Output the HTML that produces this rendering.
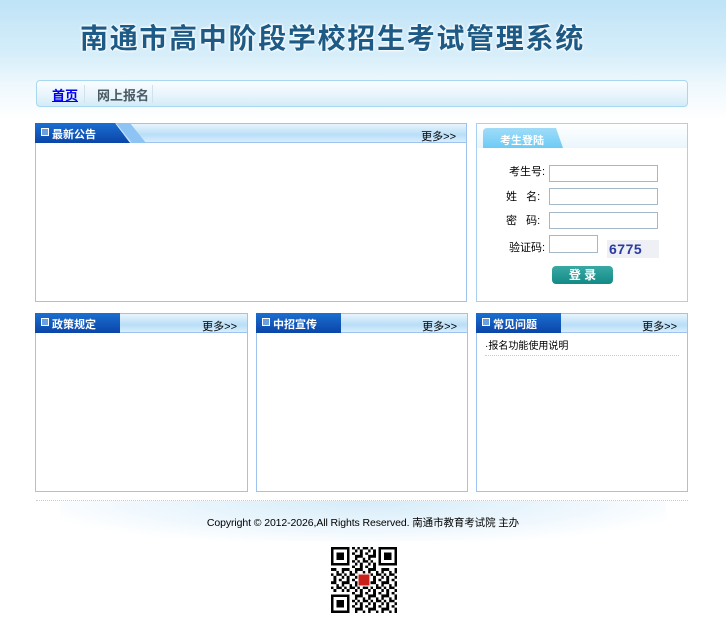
<!DOCTYPE html>
<html><head><meta charset="utf-8"><style>
*{margin:0;padding:0;box-sizing:border-box}
body{width:726px;height:629px;overflow:hidden;background:#fff;font-family:"Liberation Sans","Noto Sans CJK SC",sans-serif;font-size:12px;color:#000;position:relative}
.hdr{position:absolute;left:0;top:0;width:726px;height:120px;background:linear-gradient(180deg,#bfe3f7 0%,#d6eefa 45%,#eef8fd 70%,#fff 100%)}
.title{position:absolute;left:80px;top:17px;font-size:28px;font-weight:bold;color:#1d5a85;letter-spacing:1.7px;text-shadow:0 0 3px #fff,0 0 3px #fff,0 0 2px #fff}
.nav{position:absolute;left:36px;top:80px;width:652px;height:27px;border:1px solid #a8d8f0;border-radius:4px;background:linear-gradient(180deg,#fafdff,#e6f4fc 60%,#d3ebf8)}
.nav a{position:absolute;top:4px;font-size:13px;font-weight:bold}
.box{position:absolute;border:1px solid #9ec3ef;background:#fff}
.bar{height:19px;background:linear-gradient(180deg,#e8f4fd,#b9def7 60%,#d8eefc);border-bottom:1px solid #9ec3ef;position:relative}
.tab{position:absolute;left:-1px;top:-1px;height:20px;background:linear-gradient(180deg,#1a6fd0,#0b45a8);color:#fff;font-weight:bold;font-size:11px;padding:3px 0 0 17px}
.tab:before{content:"";position:absolute;left:6px;top:5px;width:6px;height:6px;border:1px solid #fff;background:#6aa0e0}
.more{position:absolute;right:10px;top:4px;font-size:11px}
.qr{position:absolute;left:331px;top:547px}
</style></head><body>
<div class="hdr"></div>
<div class="title">南通市高中阶段学校招生考试管理系统</div>
<div class="nav">
<a style="left:15px;color:#0000ee;text-decoration:underline">首页</a>
<span style="position:absolute;left:47px;top:4px;width:1px;height:18px;background:#cfe2ee"></span>
<a style="left:60px;color:#4a5b66">网上报名</a>
<span style="position:absolute;left:115px;top:4px;width:1px;height:18px;background:#cfe2ee"></span>
</div>

<div class="box" style="left:35px;top:123px;width:432px;height:179px">
<div class="bar"><div class="tab" style="width:95px;clip-path:polygon(0 0,80px 0,95px 100%,0 100%)">最新公告</div>
<div style="position:absolute;left:80px;top:-1px;width:30px;height:20px;background:#8ec4f4;clip-path:polygon(0 0,14px 0,30px 100%,16px 100%)"></div>
<span class="more">更多&gt;&gt;</span></div>
</div>

<div class="box" style="left:476px;top:123px;width:212px;height:179px;border-color:#a8d0f0">
<div style="height:24px;background:linear-gradient(180deg,#fff,#eaf6fc);position:relative">
<div style="position:absolute;left:6px;top:4px;width:80px;height:20px;background:linear-gradient(180deg,#a0dcf8,#6ccbf5);border-radius:4px 4px 0 0;clip-path:polygon(0 0,73px 0,80px 100%,0 100%);color:#fff;font-weight:bold;font-size:11px;padding:4px 0 0 17px">考生登陆</div></div>
<div style="position:absolute;left:32px;top:43px;font-size:11px;line-height:11px">考生号:</div>
<div style="position:absolute;left:72px;top:41px;width:109px;height:17px;border:1px solid #a5b8c8"></div>
<div style="position:absolute;left:29px;top:64px;font-size:11px">姓&nbsp;&nbsp;&nbsp;名:</div>
<div style="position:absolute;left:72px;top:64px;width:109px;height:17px;border:1px solid #a5b8c8"></div>
<div style="position:absolute;left:29px;top:88px;font-size:11px">密&nbsp;&nbsp;&nbsp;码:</div>
<div style="position:absolute;left:72px;top:88px;width:109px;height:17px;border:1px solid #a5b8c8"></div>
<div style="position:absolute;left:32px;top:115px;font-size:11px">验证码:</div>
<div style="position:absolute;left:72px;top:111px;width:49px;height:18px;border:1px solid #a5b8c8"></div>
<div style="position:absolute;left:130px;top:116px;width:52px;height:18px;background:#eef0f6;color:#2a3aa0;font-weight:bold;font-size:14px;line-height:18px;padding-left:2px;letter-spacing:.5px">6775</div>
<div style="position:absolute;left:75px;top:142px;width:61px;height:18px;border-radius:4px;background:linear-gradient(180deg,#3aa9a4,#138a86);color:#fff;font-weight:bold;font-size:12px;text-align:center;line-height:18px">登 录</div>
</div>

<div class="box" style="left:35px;top:313px;width:213px;height:179px">
<div class="bar"><div class="tab" style="width:85px">政策规定</div><span class="more">更多&gt;&gt;</span></div></div>
<div class="box" style="left:256px;top:313px;width:212px;height:179px">
<div class="bar"><div class="tab" style="width:85px">中招宣传</div><span class="more">更多&gt;&gt;</span></div></div>
<div class="box" style="left:476px;top:313px;width:212px;height:179px">
<div class="bar"><div class="tab" style="width:85px">常见问题</div><span class="more">更多&gt;&gt;</span></div>
<div style="margin:4px 8px 0 8px;font-size:10px;border-bottom:1px dotted #ccc;padding-bottom:3px">·报名功能使用说明</div></div>

<div style="position:absolute;left:36px;top:500px;width:652px;border-top:1px dotted #ccc"></div>
<div style="position:absolute;left:60px;top:501px;width:606px;height:40px;background:radial-gradient(ellipse at 50% 0%,#d5ecf9 0%,#eef7fd 50%,#fff 80%)"></div>
<div style="position:absolute;left:0;width:726px;top:515px;text-align:center;font-size:10.5px;letter-spacing:-0.1px">Copyright © 2012-2026,All Rights Reserved. 南通市教育考试院 主办</div>

<svg class="qr" width="66" height="66" viewBox="0 0 25 25" shape-rendering="crispEdges">
<defs><pattern id="p" width="5" height="5" patternUnits="userSpaceOnUse">
<rect x="0" y="0" width="1" height="1"/><rect x="2" y="0" width="2" height="1"/><rect x="1" y="1" width="1" height="2"/><rect x="3" y="2" width="1" height="1"/><rect x="4" y="1" width="1" height="1"/><rect x="0" y="3" width="2" height="1"/><rect x="2" y="4" width="1" height="1"/><rect x="4" y="3" width="1" height="2"/></pattern></defs>
<rect width="25" height="25" fill="url(#p)"/>
<g><rect x="0" y="0" width="8" height="8" fill="#fff"/><rect x="17" y="0" width="8" height="8" fill="#fff"/><rect x="0" y="17" width="8" height="8" fill="#fff"/>
<rect x="0.5" y="0.5" width="6" height="6" fill="none" stroke="#000"/><rect x="2" y="2" width="3" height="3"/>
<rect x="18.5" y="0.5" width="6" height="6" fill="none" stroke="#000"/><rect x="20" y="2" width="3" height="3"/>
<rect x="0.5" y="18.5" width="6" height="6" fill="none" stroke="#000"/><rect x="2" y="20" width="3" height="3"/>
<rect x="10" y="10" width="5" height="5" fill="#fff"/><rect x="10.5" y="10.5" width="4" height="4" fill="#c8201a"/></g>
</svg>
</body></html>
